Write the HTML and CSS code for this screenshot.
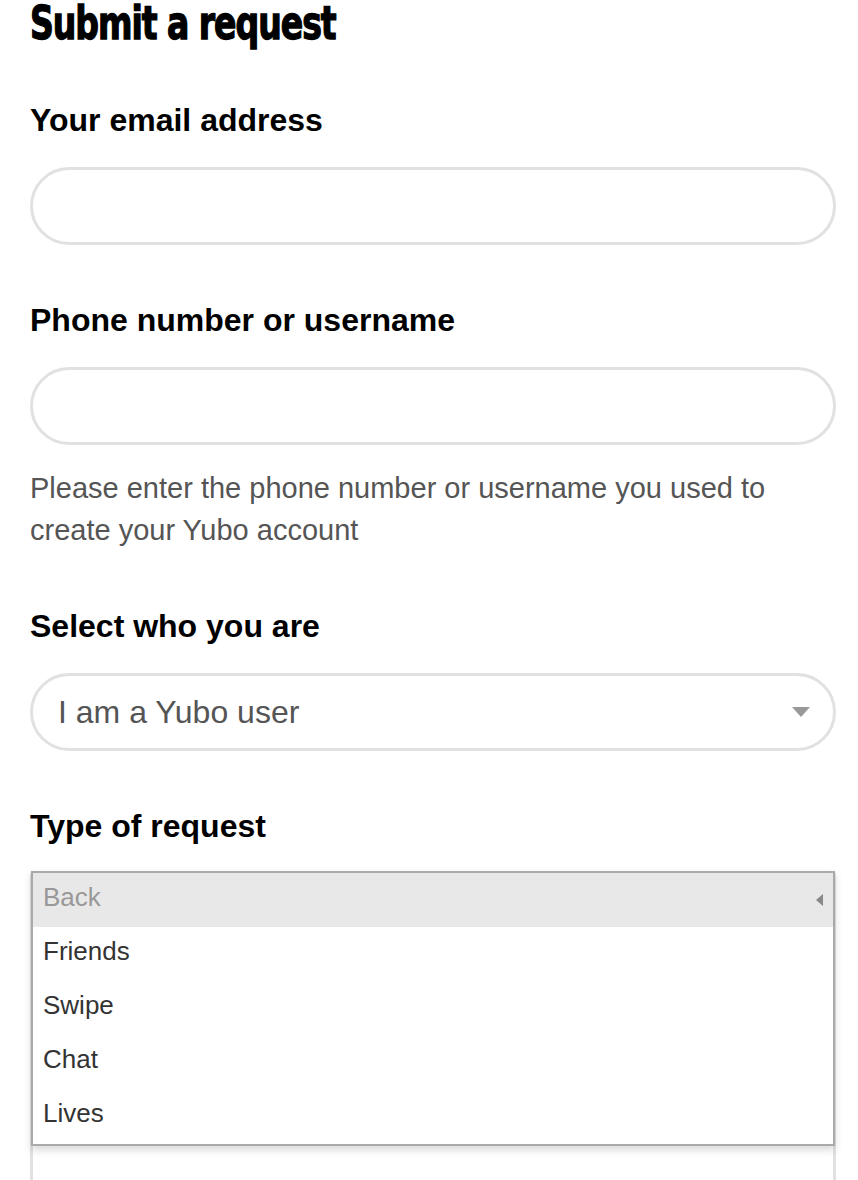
FILE: index.html
```html
<!DOCTYPE html>
<html lang="en">
<head>
    <meta charset="UTF-8">
    <meta name="viewport" content="width=device-width, initial-scale=1.0">
    <title>Submit a request</title>
    <link rel="stylesheet" href="styles.css">
</head>
<body>
    <div class="page">
        <h1 class="page-title">Submit a request</h1>

        <form class="request-form">
            <div class="field">
                <label class="field-label" for="email">Your email address</label>
                <input class="field-input" type="email" id="email">
            </div>

            <div class="field">
                <label class="field-label" for="phone">Phone number or username</label>
                <input class="field-input" type="text" id="phone">
                <p class="field-hint">Please enter the phone number or username you used to create your Yubo account</p>
            </div>

            <div class="field">
                <label class="field-label">Select who you are</label>
                <div class="field-input field-select">
                    <span class="select-value">I am a Yubo user</span>
                    <span class="select-arrow"></span>
                </div>
            </div>

            <div class="field">
                <label class="field-label">Type of request</label>
                <div class="nested-select">
                    <div class="nested-box"></div>
                    <ul class="dropdown">
                        <li class="dropdown-item dropdown-back">Back <span class="back-arrow"></span></li>
                        <li class="dropdown-item">Friends</li>
                        <li class="dropdown-item">Swipe</li>
                        <li class="dropdown-item">Chat</li>
                        <li class="dropdown-item">Lives</li>
                    </ul>
                </div>
            </div>
        </form>
    </div>
</body>
</html>
```

FILE: styles.css
```css
body {
    margin: 0;
    font-family: "Liberation Sans", Arial, sans-serif;
    background: #fff;
    color: #000;
    overflow: hidden;
}
.page {
    padding: 0 22px 0 30px;
}
.page-title {
    font-family: "DejaVu Sans Condensed", "DejaVu Sans", sans-serif;
    font-weight: bold;
    font-size: 46px;
    line-height: 54px;
    letter-spacing: -1.3px;
    margin: -4px 0 -4px 0;
    transform: scaleX(0.8);
    transform-origin: left;
    white-space: nowrap;
    -webkit-text-stroke: 1.3px #000;
}
.field {
    margin-top: 55px;
}
.field:first-child {
    margin-top: 54px;
}
.field-label {
    display: block;
    font-weight: bold;
    font-size: 32px;
    line-height: 40px;
    margin-bottom: 27px;
}
.field-input {
    display: block;
    box-sizing: border-box;
    width: 100%;
    height: 78px;
    border: 3px solid #e1e1e1;
    border-radius: 40px;
    background: #fff;
    outline: none;
    padding: 0 25px;
    font-size: 28px;
}
.field-hint {
    margin: 22px 0 0 0;
    font-size: 29px;
    line-height: 42px;
    color: #555;
}
.field-select {
    display: flex;
    align-items: center;
    justify-content: space-between;
}
.select-value {
    font-size: 32px;
    color: #555;
}
.select-arrow {
    width: 0;
    height: 0;
    border-left: 9px solid transparent;
    border-right: 9px solid transparent;
    border-top: 10px solid #999;
    margin-right: -2px;
}
.nested-select {
    position: relative;
    margin-top: -2px;
}
.nested-box {
    height: 400px;
    border: 3px solid #e1e1e1;
    border-radius: 4px;
}
.dropdown {
    position: absolute;
    top: 0;
    left: 1px;
    right: 1px;
    margin: 0;
    padding: 0 0 1px 0;
    list-style: none;
    background: #fff;
    border: 2px solid #aaa;
    box-shadow: 0 4px 8px rgba(0, 0, 0, 0.15);
}
.dropdown-item {
    box-sizing: border-box;
    height: 54px;
    line-height: 30px;
    padding: 0 10px 6px 10px;
    font-size: 26px;
    color: #333;
    display: flex;
    align-items: center;
    justify-content: space-between;
}
.dropdown-back {
    background: #e8e8e8;
    color: #999;
}
.back-arrow {
    width: 0;
    height: 0;
    border-top: 6px solid transparent;
    border-bottom: 6px solid transparent;
    border-right: 7px solid #888;
    margin-top: 6px;
}
```
